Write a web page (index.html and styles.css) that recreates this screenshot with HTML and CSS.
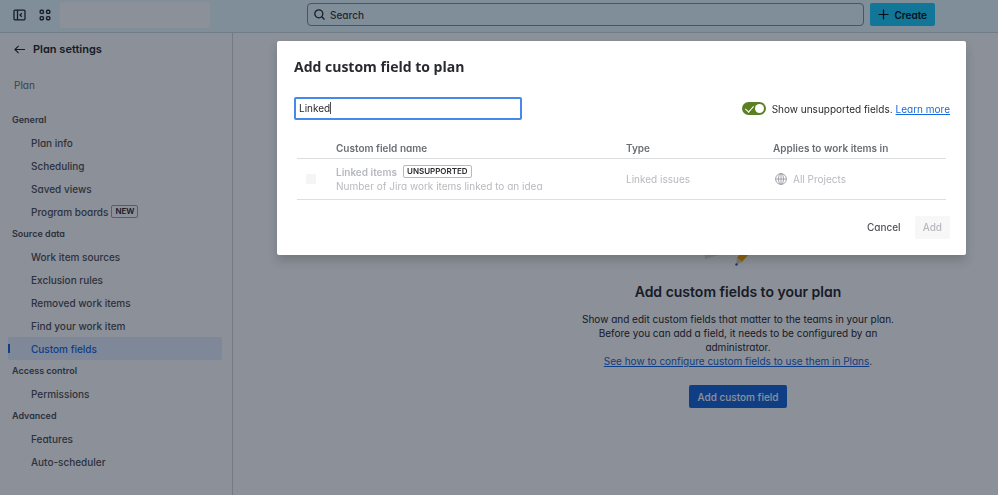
FILE: index.html
```html
<!DOCTYPE html>
<html lang="en">
<head>
    <meta charset="UTF-8">
    <meta name="viewport" content="width=device-width, initial-scale=1.0">
    <title>Plan settings</title>
    <link rel="stylesheet" href="styles.css">
</head>
<body>
    <header class="topbar">
        <div class="topbar-left">
            <button class="icon-btn" aria-label="Collapse sidebar">
                <svg width="13" height="12" viewBox="0 0 13 12" fill="none" stroke="currentColor" stroke-width="1.3">
                    <rect x="1" y="1.2" width="11" height="9.6" rx="1"/>
                    <path d="M4.5 1v10M8.8 4.2 7 6l1.8 1.8"/>
                </svg>
            </button>
            <button class="icon-btn" aria-label="Switch apps">
                <svg width="12" height="12" viewBox="0 0 12 12" fill="none" stroke="currentColor" stroke-width="1.4">
                    <rect x="1.2" y="1.2" width="3.2" height="3.2" rx="1"/>
                    <rect x="7.6" y="1.2" width="3.2" height="3.2" rx="1"/>
                    <rect x="1.2" y="7.6" width="3.2" height="3.2" rx="1"/>
                    <rect x="7.6" y="7.6" width="3.2" height="3.2" rx="1"/>
                </svg>
            </button>
            <div class="site-logo"></div>
        </div>
        <label class="search">
            <svg width="11" height="11" viewBox="0 0 11 11" fill="none" stroke="currentColor" stroke-width="1.3">
                <circle cx="4.8" cy="4.8" r="4"/>
                <path d="m7.8 7.8 2.7 2.7"/>
            </svg>
            <input type="search" placeholder="Search" aria-label="Search">
        </label>
        <button class="create-btn">
            <svg width="11" height="11" viewBox="0 0 11 11" fill="none" stroke="currentColor" stroke-width="1.2">
                <path d="M5.5 0.5v10M0.5 5.5h10"/>
            </svg>
            Create
        </button>
    </header>

    <div class="layout">
        <nav class="sidebar">
            <a href="#" class="back">
                <svg width="11" height="9" viewBox="0 0 11 9" fill="none" stroke="currentColor" stroke-width="1.1">
                    <path d="M11 4.5H1M4.6 0.8 0.9 4.5l3.7 3.7"/>
                </svg>
                Plan settings
            </a>
            <p class="plan-name">Plan</p>

            <h2>General</h2>
            <ul>
                <li><a href="#">Plan info</a></li>
                <li><a href="#">Scheduling</a></li>
                <li><a href="#">Saved views</a></li>
                <li><a href="#">Program boards <span class="badge-new">NEW</span></a></li>
            </ul>
            <h2>Source data</h2>
            <ul>
                <li><a href="#">Work item sources</a></li>
                <li><a href="#">Exclusion rules</a></li>
                <li><a href="#">Removed work items</a></li>
                <li><a href="#">Find your work item</a></li>
                <li><a href="#" class="active">Custom fields</a></li>
            </ul>
            <h2>Access control</h2>
            <ul>
                <li><a href="#">Permissions</a></li>
            </ul>
            <h2>Advanced</h2>
            <ul>
                <li><a href="#">Features</a></li>
                <li><a href="#">Auto-scheduler</a></li>
            </ul>
        </nav>

        <main class="content">
            <div class="empty-state">
                <svg class="empty-art" width="100" height="66" viewBox="0 0 100 66">
                    <path d="M14 20 60 8l2 38-45 13z" fill="#dddee1"/>
                    <path d="M64 36 72 41 54 62l-5-4z" fill="#fca700"/>
                    <path d="m49 58 5 4-6 3z" fill="#f0d3b0"/>
                    <circle cx="48.5" cy="64.5" r="1.2" fill="#1868db"/>
                </svg>
                <h1>Add custom fields to your plan</h1>
                <p>Show and edit custom fields that matter to the teams in your plan. Before you can add a field, it needs to be configured by an administrator.<br><a href="#">See how to configure custom fields to use them in Plans</a>.</p>
                <button class="primary-btn">Add custom field</button>
            </div>
        </main>
    </div>

    <div class="overlay">
        <section class="modal" role="dialog" aria-labelledby="modal-title">
            <h2 id="modal-title">Add custom field to plan</h2>
            <div class="filters">
                <div class="field-search">
                    <input type="text" value="Linked" aria-label="Search custom fields">
                    <span class="caret"></span>
                </div>
                <div class="toggle-row">
                    <input type="checkbox" class="toggle" id="unsupported" checked>
                    <label for="unsupported">Show unsupported fields.</label>
                    <a href="#">Learn more</a>
                </div>
            </div>
            <table class="fields">
                <thead>
                    <tr>
                        <th class="col-check"></th>
                        <th class="col-name">Custom field name</th>
                        <th class="col-type">Type</th>
                        <th>Applies to work items in</th>
                    </tr>
                </thead>
                <tbody>
                    <tr>
                        <td><input type="checkbox" class="check" aria-label="Linked items" disabled></td>
                        <td>
                            <div class="field-name"><b>Linked items</b> <span class="badge">UNSUPPORTED</span></div>
                            <div>Number of Jira work items linked to an idea</div>
                        </td>
                        <td>Linked issues</td>
                        <td>
                            <div class="projects">
                                <svg width="12" height="12" viewBox="0 0 12 12" fill="none" stroke="#9a9ca3" stroke-width="0.9">
                                    <circle cx="6" cy="6" r="5.4"/>
                                    <ellipse cx="6" cy="6" rx="2.5" ry="5.4"/>
                                    <path d="M0.6 6h10.8M6 0.6v10.8"/>
                                </svg>
                                All Projects
                            </div>
                        </td>
                    </tr>
                </tbody>
            </table>
            <div class="modal-footer">
                <button class="cancel-btn">Cancel</button>
                <button class="add-btn" disabled>Add</button>
            </div>
        </section>
    </div>
</body>
</html>
```
FILE: styles.css
```css
* {
    box-sizing: border-box;
}
body {
    margin: 0;
    min-height: 100vh;
    display: flex;
    flex-direction: column;
    font-family: Inter, "Liberation Sans", sans-serif;
    font-feature-settings: "cv11";
    font-size: 10px;
    line-height: 14px;
    color: #292a2e;
    background: white;
}
button, input {
    font: inherit;
    font-feature-settings: inherit;
    color: inherit;
}
button {
    border: none;
    border-radius: 2px;
    padding: 0 8px;
    height: 23px;
    font-weight: 500;
    background: none;
    cursor: pointer;
}
h1, h2, p, ul {
    margin: 0;
    padding: 0;
}
a { color: #1868db; }
svg { flex: none; }

.topbar {
    display: flex;
    align-items: center;
    gap: 6px;
    height: 33px;
    padding: 0 63px 3px 13px;
    background: #e7fbff;
    border-bottom: 1px solid #ccdde2;
}
.topbar-left {
    display: flex;
    align-items: center;
    gap: 13px;
    width: 288px;
}
.icon-btn {
    display: flex;
    align-items: center;
    padding: 0;
    height: 12px;
}
.site-logo {
    width: 150px;
    height: 26px;
    border-radius: 2px;
    background: white;
    margin-left: -4px;
}
.search {
    flex: 1;
    display: flex;
    align-items: center;
    gap: 5px;
    height: 23px;
    padding: 0 6px;
    border: 1px solid #8c8f97;
    border-radius: 4px;
}
.search input {
    flex: 1;
    border: none;
    background: none;
    padding: 0;
    outline: none;
    font-weight: 500;
}
.search input::placeholder {
    color: #3b3d42;
}
.create-btn {
    display: flex;
    align-items: center;
    gap: 5px;
    background: #1cd0ff;
    font-weight: 600;
    color: #101214;
}

.layout {
    flex: 1;
    display: flex;
}
.sidebar {
    width: 233px;
    padding: 9px 10px 0 8px;
    border-right: 1px solid #d5d6db;
}
.back {
    display: flex;
    align-items: center;
    gap: 8px;
    padding-left: 6px;
    font-size: 11px;
    font-weight: 600;
    color: #292a2e;
    text-decoration: none;
}
.plan-name {
    padding: 22px 0 17px 6px;
    color: #6b6e76;
}
.sidebar h2 {
    padding-left: 4px;
    font-size: 9px;
    font-weight: 600;
    line-height: 22px;
    color: #505258;
}
.sidebar ul {
    list-style: none;
}
.sidebar li a {
    display: flex;
    align-items: center;
    gap: 3px;
    height: 23px;
    padding-left: 23px;
    border-radius: 2px;
    font-weight: 500;
    color: #505258;
    text-decoration: none;
}
.sidebar li .active {
    position: relative;
    background: #e6f0ff;
    color: #1868db;
}
.active::before {
    content: "";
    position: absolute;
    left: 0;
    top: 7px;
    width: 2px;
    height: 9px;
    background: #1868db;
}
.badge-new {
    padding: 0 3px;
    border: 1px solid #c97cf4;
    border-radius: 2px;
    font-size: 8px;
    font-weight: 600;
    line-height: 11px;
    color: #292a2e;
}

.content {
    flex: 1;
    padding: 167px 24px 0 269px;
}
.empty-state {
    display: flex;
    flex-direction: column;
    align-items: center;
    text-align: center;
}
.empty-art {
    margin-bottom: 16px;
}
.empty-state h1 {
    font-size: 14px;
    font-weight: 600;
    line-height: 20px;
}
.empty-state p {
    width: 320px;
    margin: 10px 0 17px;
}
.primary-btn {
    background: #1868db;
    color: white;
}

.overlay {
    position: fixed;
    inset: 0;
    padding: 41px 32px 0 277px;
    background: rgba(5, 12, 31, 0.46);
}
.modal {
    padding: 16px;
    padding-left: 17px;
    background: white;
    border-radius: 2px;
    box-shadow: 0 6px 10px rgba(30, 31, 33, 0.2);
}
.modal h2 {
    font-family: "Open Sans", "Noto Sans", sans-serif;
    font-size: 14px;
    font-weight: 700;
    line-height: 20px;
}
.filters {
    display: flex;
    justify-content: space-between;
    align-items: center;
    margin: 20px 0 17px;
}
.field-search {
    position: relative;
}
.field-search input {
    display: block;
    width: 228px;
    height: 23px;
    padding: 0 3px 1px;
    border: 2px solid #4688ec;
    border-radius: 2px;
    outline: none;
}
.caret {
    position: absolute;
    left: 36px;
    top: 5px;
    width: 1px;
    height: 12px;
    background: #505258;
}
.toggle-row {
    display: flex;
    align-items: center;
    gap: 3px;
}
.toggle {
    appearance: none;
    position: relative;
    width: 24px;
    height: 13px;
    margin: 0 3px 0 0;
    border-radius: 7px;
    background: #5b7f24;
}
.toggle::before {
    content: "";
    position: absolute;
    right: 2px;
    top: 2px;
    width: 9px;
    height: 9px;
    border-radius: 50%;
    background: white;
}
.toggle::after {
    content: "";
    position: absolute;
    left: 5px;
    top: 2px;
    width: 4px;
    height: 7px;
    border: solid white;
    border-width: 0 1px 1px 0;
    transform: rotate(42deg);
}
.fields {
    width: calc(100% - 7px);
    margin: 0 4px 0 3px;
    border-collapse: collapse;
    table-layout: fixed;
    color: #b7b9be;
}
.fields th {
    height: 21px;
    padding: 1px 0 0;
    font-weight: 600;
    text-align: left;
    color: #6b6e76;
    border-bottom: 1px solid #dddee1;
}
.fields td {
    height: 41px;
    padding: 0;
    border-bottom: 1px solid #dddee1;
}
.col-check { width: 39px; }
.col-name { width: 290px; }
.col-type { width: 147px; }
.fields b { font-weight: 600; }
.field-name {
    display: flex;
    align-items: center;
    gap: 6px;
}
.badge {
    padding: 0 3px;
    border: 1px solid #b7b9be;
    border-radius: 2px;
    font-size: 8px;
    font-weight: 600;
    line-height: 11px;
    color: #292a2e;
}
.check {
    appearance: none;
    display: block;
    width: 10px;
    height: 10px;
    margin: 0 0 0 9px;
    border-radius: 1px;
    background: #f5f5f6;
}
.projects {
    display: flex;
    align-items: center;
    gap: 6px;
    padding-left: 2px;
}
.modal-footer {
    display: flex;
    justify-content: flex-end;
    gap: 6px;
    margin-top: 16px;
}
.cancel-btn { color: #505258; }
.add-btn {
    background: #f7f7f8;
    color: #b7b9be;
}
```
